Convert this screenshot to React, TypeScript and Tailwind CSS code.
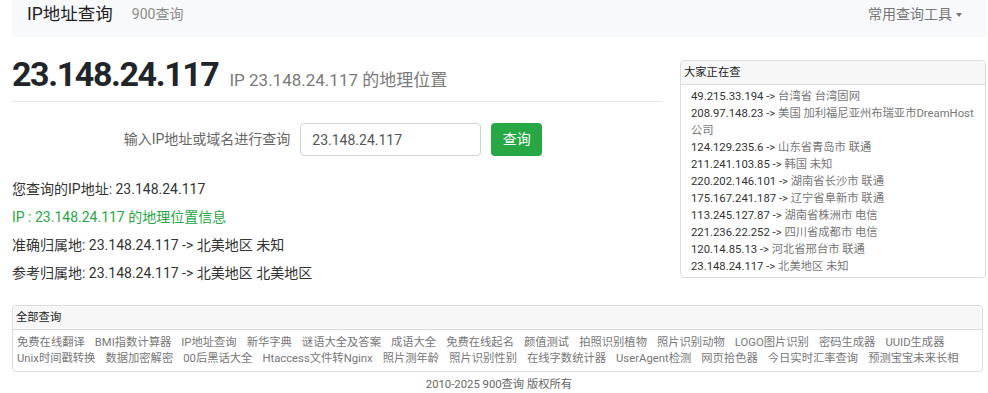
import React from 'react';

const font = { fontFamily: 'Roboto, "Noto Sans CJK SC", sans-serif' };

const recent: [string, string][] = [
  ['49.215.33.194', '台湾省 台湾固网'],
  ['208.97.148.23', '美国 加利福尼亚州布瑞亚市DreamHost公司'],
  ['124.129.235.6', '山东省青岛市 联通'],
  ['211.241.103.85', '韩国 未知'],
  ['220.202.146.101', '湖南省长沙市 联通'],
  ['175.167.241.187', '辽宁省阜新市 联通'],
  ['113.245.127.87', '湖南省株洲市 电信'],
  ['221.236.22.252', '四川省成都市 电信'],
  ['120.14.85.13', '河北省邢台市 联通'],
  ['23.148.24.117', '北美地区 未知'],
];

const tools = [
  '免费在线翻译', 'BMI指数计算器', 'IP地址查询', '新华字典', '谜语大全及答案', '成语大全', '免费在线起名',
  '颜值测试', '拍照识别植物', '照片识别动物', 'LOGO图片识别', '密码生成器', 'UUID生成器',
  'Unix时间戳转换', '数据加密解密', '00后黑话大全', 'Htaccess文件转Nginx', '照片测年龄', '照片识别性别',
  '在线字数统计器', 'UserAgent检测', '网页拾色器', '今日实时汇率查询', '预测宝宝未来长相',
];

export default function App() {
  return (
    <div className="w-[988px] h-[393px] bg-white text-[#333] overflow-hidden" style={font}>
      <div className="ml-3 w-[974px]">
        {/* navbar */}
        <nav className="h-[37px] bg-[#f8f9fa] flex items-center px-[15px] pb-[8px]">
          <span className="text-[17.5px] leading-none text-[#222]">IP地址查询</span>
          <span className="ml-[19px] text-[14px] text-[#8c8c8c]">900查询</span>
          <span className="ml-auto mr-[9px] text-[14px] text-[#777] flex items-center">
            常用查询工具
            <span className="ml-[4px] w-0 h-0 border-l-[3.5px] border-r-[3.5px] border-t-[4px] border-l-transparent border-r-transparent border-t-[#777]" />
          </span>
        </nav>

        <div className="flex items-start gap-[18px]">
          {/* left column */}
          <div className="flex-1">
            <div className="mt-[16px] flex items-baseline pb-[5px] border-b border-[#e5e5e5]">
              <h1 className="text-[34px] font-bold leading-[43px] tracking-[-1.4px] text-[#212529]">23.148.24.117</h1>
              <span className="ml-[11px] text-[17px] text-[#7a7a7a]">IP 23.148.24.117 的地理位置</span>
            </div>

            <div className="mt-[21px] flex items-center justify-center gap-[10px] pr-[8px]">
              <label className="text-[14px] text-[#666]">输入IP地址或域名进行查询</label>
              <input
                readOnly
                value="23.148.24.117"
                className="w-[181px] h-[33px] border border-[#ced4da] rounded-[4px] px-[11px] text-[14px] text-[#555] outline-none"
                style={font}
              />
              <button className="w-[51px] h-[33px] rounded-[4px] bg-[#28a745] text-white text-[14px]">查询</button>
            </div>

            <div className="mt-[19px] text-[14px] leading-[28px]">
              <p>您查询的IP地址: 23.148.24.117</p>
              <p className="text-[#28a745]">IP : 23.148.24.117 的地理位置信息</p>
              <p>准确归属地: 23.148.24.117 -&gt; 北美地区 未知</p>
              <p>参考归属地: 23.148.24.117 -&gt; 北美地区 北美地区</p>
            </div>
          </div>

          {/* right column */}
          <div className="w-[306px] mt-[23px] border border-[#ddd] rounded-[4px] overflow-hidden">
            <div className="h-[24px] bg-[#f7f7f7] border-b border-[#ddd] px-[3px] text-[11.3px] leading-[23px] text-[#222]">大家正在查</div>
            <ul className="pl-[10px] pr-[3px] pt-[3px] pb-[2px] text-[11.3px] leading-[17px]">
              {recent.map(([ip, loc]) => (
                <li key={ip}>
                  <span className="text-[#333]">{ip} -&gt; </span>
                  <span className="text-[#777]">{loc}</span>
                </li>
              ))}
            </ul>
          </div>
        </div>

        {/* all tools */}
        <div className="mt-[18px] w-[971px] border border-[#ddd] rounded-[4px] overflow-hidden">
          <div className="h-[24px] bg-[#f7f7f7] border-b border-[#ddd] px-[3px] text-[11.3px] leading-[23px] text-[#222]">全部查询</div>
          <div className="px-[4px] pt-[5px] pb-[4px] flex flex-wrap gap-x-[10px] text-[11.3px] leading-[16px] text-[#777]">
            {tools.map(t => (
              <span key={t}>{t}</span>
            ))}
          </div>
        </div>

        <p className="mt-[5px] text-center text-[11.3px] text-[#666]">2010-2025 900查询 版权所有</p>
      </div>
    </div>
  );
}
